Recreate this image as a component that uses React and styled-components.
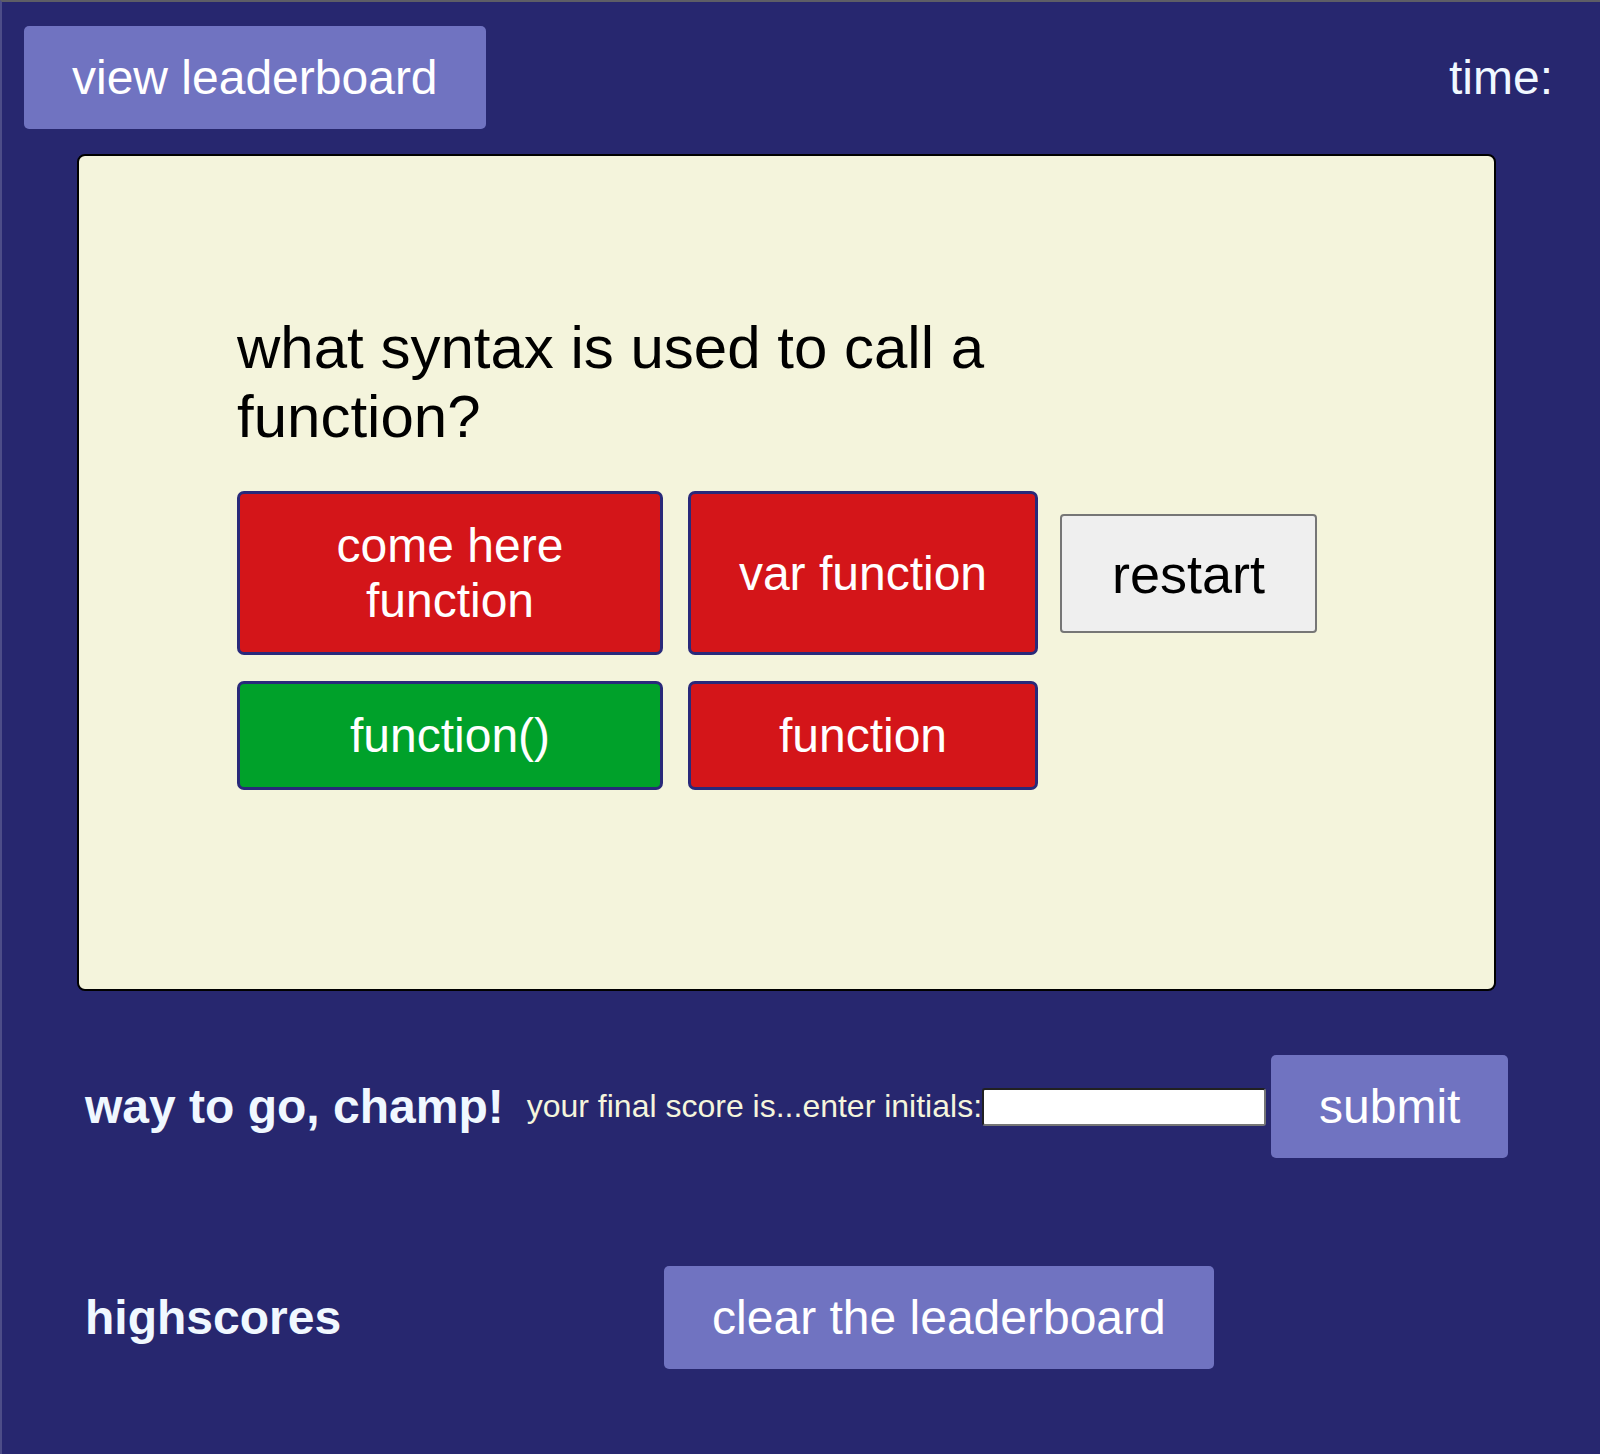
import React from 'react';
import styled, { createGlobalStyle } from 'styled-components';

const GlobalStyle = createGlobalStyle`
    html, body {
        margin: 0;
        padding: 0;
        background-color: #27276f;
    }
    body {
        font-family: "Liberation Sans", Arial, sans-serif;
    }
`;

const Page = styled.div`
    min-height: 100vh;
    box-sizing: border-box;
    background-color: #27276f;
    border-top: 2px solid #5e5e66;
    border-left: 2px solid #4d4d88;
    padding-bottom: 40px;
`;

const Header = styled.header`
    display: flex;
    justify-content: space-between;
    align-items: center;
    padding: 24px 47px 0 22px;
`;

const PurpleButton = styled.button`
    font-family: "Liberation Sans", Arial, sans-serif;
    font-size: 48px;
    line-height: normal;
    color: white;
    background-color: #7073c1;
    border: none;
    border-radius: 5px;
    padding: 24px 48px;
    margin-left: ${props => props.$offset || 0}px;
`;

const Timer = styled.div`
    font-size: 48px;
    color: aliceblue;
`;

const QuizCard = styled.main`
    box-sizing: border-box;
    width: 1419px;
    height: 837px;
    margin: 25px 0 0 75px;
    padding: 157px 0 0 158px;
    background-color: #f4f4dc;
    border: 2px solid black;
    border-radius: 8px;
`;

const Question = styled.h2`
    margin: 0;
    max-width: 800px;
    font-size: 60px;
    font-weight: normal;
    line-height: normal;
    color: black;
`;

const Answers = styled.div`
    display: grid;
    grid-template-columns: 426px 350px auto;
    column-gap: 25px;
    row-gap: 26px;
    margin-top: 40px;
`;

const AnswerButton = styled.button`
    font-family: "Liberation Sans", Arial, sans-serif;
    font-size: 48px;
    line-height: normal;
    color: white;
    background-color: ${props => props.$correct ? '#00a12a' : '#d41519'};
    border: 3px solid #29297a;
    border-radius: 7px;
    padding: 24px;
`;

const RestartButton = styled.button`
    grid-column: 3;
    grid-row: 1;
    align-self: center;
    justify-self: start;
    margin-left: -3px;
    font-family: "Liberation Sans", Arial, sans-serif;
    font-size: 54px;
    line-height: normal;
    color: black;
    background-color: #efefef;
    border: 2px solid #767676;
    border-radius: 4px;
    padding: 27px 50px 26px;
`;

const Row = styled.section`
    display: flex;
    align-items: center;
    margin-top: ${props => props.$top}px;
    padding-left: 83px;
`;

const Heading = styled.h2`
    margin: 0 ${props => props.$gap}px 0 0;
    font-size: 48px;
    font-weight: bold;
    line-height: normal;
    color: aliceblue;
`;

const ScoreLabel = styled.label`
    font-size: 32px;
    color: beige;
`;

const InitialsInput = styled.input`
    box-sizing: border-box;
    width: 284px;
    height: 38px;
    border: 2px inset #767676;
    border-radius: 3px;
    background: white;
`;

const answers = [
    { text: 'come here function' },
    { text: 'var function' },
    { text: 'function()', correct: true },
    { text: 'function' },
];

export default function App() {
    return (
        <Page>
            <GlobalStyle />
            <Header>
                <PurpleButton>view leaderboard</PurpleButton>
                <Timer>time:</Timer>
            </Header>

            <QuizCard>
                <Question>what syntax is used to call a function?</Question>
                <Answers>
                    {answers.map(a => (
                        <AnswerButton key={a.text} $correct={a.correct}>{a.text}</AnswerButton>
                    ))}
                    <RestartButton>restart</RestartButton>
                </Answers>
            </QuizCard>

            <Row $top={64}>
                <Heading $gap={23}>way to go, champ!</Heading>
                <ScoreLabel htmlFor="initials">your final score is...enter initials:</ScoreLabel>
                <InitialsInput id="initials" type="text" />
                <PurpleButton $offset={5}>submit</PurpleButton>
            </Row>

            <Row $top={108}>
                <Heading $gap={323}>highscores</Heading>
                <PurpleButton>clear the leaderboard</PurpleButton>
            </Row>
        </Page>
    );
}
